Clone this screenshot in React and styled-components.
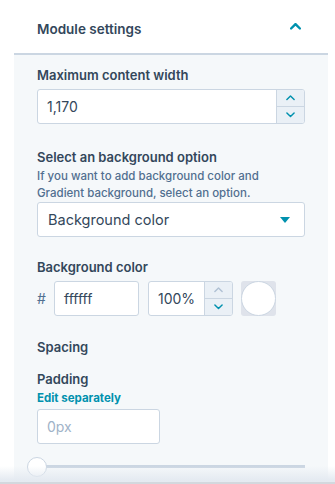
import styled, { createGlobalStyle } from "styled-components";

const GlobalStyle = createGlobalStyle`
  html, body {
    margin: 0;
    padding: 0;
    background: #fff;
  }
  body {
    font-family: Inter, "Noto Sans", sans-serif;
    color: #33475b;
  }
`;

const Page = styled.div`
  position: relative;
  width: 335px;
  height: 484px;
  overflow: hidden;
  background: #fff;
`;

const Header = styled.div`
  display: flex;
  align-items: center;
  justify-content: space-between;
  height: 55px;
  margin-left: 14px;
  margin-right: 7px;
  padding: 0 27px 0 23px;
  box-sizing: border-box;
  border-bottom: 2px solid #cbd6e2;
`;

const HeaderTitle = styled.h2`
  margin: 0;
  font-size: 13.5px;
  font-weight: 600;
  color: #33475b;
  padding-top: 4px;
`;

const Panel = styled.div`
  margin-left: 14px;
  margin-right: 7px;
  background: #f5f8fa;
  padding: 11px 23px 40px 23px;
  display: flex;
  flex-direction: column;
`;

const Field = styled.div`
  display: flex;
  flex-direction: column;
  margin-bottom: ${(p) => p.$mb || 0}px;
`;

const Label = styled.label`
  font-size: 13px;
  font-weight: 600;
  line-height: 18px;
  color: #33475b;
  margin-bottom: ${(p) => p.$mb || 0}px;
`;

const Help = styled.p`
  margin: 0;
  font-size: 11.5px;
  font-weight: 500;
  line-height: 17px;
  color: #516f90;
`;

const Link = styled.a`
  font-size: 11.5px;
  font-weight: 700;
  line-height: 16px;
  color: #0091ae;
  margin-bottom: 3px;
  cursor: pointer;
`;

const InputBox = styled.div`
  display: flex;
  height: 35px;
  width: ${(p) => p.$w}px;
  box-sizing: border-box;
  border: 1px solid #cbd6e2;
  border-radius: 3px;
  background: #fff;
  overflow: hidden;
`;

const InputText = styled.span`
  flex: 1;
  display: flex;
  align-items: center;
  padding-left: ${(p) => p.$pl || 9}px;
  font-size: ${(p) => p.$fs || 14}px;
  color: ${(p) => (p.$placeholder ? "#9fb3c8" : "#33475b")};
`;

const Stepper = styled.div`
  width: 27px;
  display: flex;
  flex-direction: column;
  border-left: 1px solid #cbd6e2;
  background: #eaf0f6;
`;

const StepBtn = styled.div`
  flex: 1;
  display: flex;
  align-items: center;
  justify-content: center;
  & + & {
    border-top: 1px solid #cbd6e2;
  }
`;

const SelectBox = styled(InputBox)`
  align-items: center;
  justify-content: space-between;
  padding-right: 14px;
`;

const Row = styled.div`
  display: flex;
  align-items: center;
  gap: 9px;
`;

const Hash = styled.span`
  font-size: 14px;
  color: #516f90;
  width: 8px;
`;

const SwatchWrap = styled.div`
  position: relative;
  width: 35px;
  height: 35px;
  background: #dfe3eb;
  border-radius: 3px;
  margin-left: -1px;
`;

const Swatch = styled.div`
  position: absolute;
  inset: 0;
  border-radius: 50%;
  background: #fff;
  border: 1px solid #cbd6e2;
  box-sizing: border-box;
`;

const SectionTitle = styled.div`
  font-size: 13px;
  font-weight: 600;
  line-height: 18px;
  color: #33475b;
  margin: 22px 0 14px;
`;

const Slider = styled.div`
  position: relative;
  height: 20px;
  margin: 12px 0 0 -10px;
  display: flex;
  align-items: center;
`;

const Track = styled.div`
  flex: 1;
  height: 3px;
  background: #cbd6e2;
  margin-left: 10px;
`;

const Thumb = styled.div`
  position: absolute;
  left: 0;
  top: 1px;
  width: 18px;
  height: 18px;
  border-radius: 50%;
  background: #fff;
  border: 1px solid #cbd6e2;
`;

const Footer = styled.div`
  position: absolute;
  left: 0;
  right: 0;
  bottom: 0;
  height: 16px;
  background: linear-gradient(
    to bottom,
    rgba(234, 240, 246, 0) 0%,
    rgba(228, 234, 241, 0.95) 85%
  );
  border-bottom: 2px solid #d3d8de;
`;

const Chevron = ({ up, size = 10, color = "#0091ae", w = 2 }) => (
  <svg width={size} height={size * 0.6} viewBox="0 0 10 6">
    <path
      d={up ? "M1 5 L5 1 L9 5" : "M1 1 L5 5 L9 1"}
      fill="none"
      stroke={color}
      strokeWidth={w}
      strokeLinecap="round"
      strokeLinejoin="round"
    />
  </svg>
);

const Spin = ({ upColor = "#0091ae" }) => (
  <Stepper>
    <StepBtn>
      <Chevron up size={9} color={upColor} w={1.6} />
    </StepBtn>
    <StepBtn>
      <Chevron size={9} w={1.6} />
    </StepBtn>
  </Stepper>
);

export default function App() {
  return (
    <Page>
      <GlobalStyle />
      <Header>
        <HeaderTitle>Module settings</HeaderTitle>
        <Chevron up size={11} w={2.2} />
      </Header>
      <Panel>
        <Field $mb={24}>
          <Label $mb={5}>Maximum content width</Label>
          <InputBox $w={268}>
            <InputText>1,170</InputText>
            <Spin />
          </InputBox>
        </Field>

        <Field $mb={21}>
          <Label $mb={2}>Select an background option</Label>
          <Help>
            If you want to add background color and
            <br />
            Gradient background, select an option.
          </Help>
          <SelectBox $w={268}>
            <InputText $pl={10} $fs={14.5}>
              Background color
            </InputText>
            <svg width="10" height="6" viewBox="0 0 10 6">
              <path d="M0 0 L10 0 L5 6 Z" fill="#0091ae" />
            </svg>
          </SelectBox>
        </Field>

        <Field>
          <Label $mb={5}>Background color</Label>
          <Row>
            <Hash>#</Hash>
            <InputBox $w={85}>
              <InputText $pl={9}>ffffff</InputText>
            </InputBox>
            <InputBox $w={85}>
              <InputText $pl={9}>100%</InputText>
              <Spin upColor="#b0c1d4" />
            </InputBox>
            <SwatchWrap>
              <Swatch />
            </SwatchWrap>
          </Row>
        </Field>

        <SectionTitle>Spacing</SectionTitle>

        <Field>
          <Label $mb={2}>Padding</Label>
          <Link>Edit separately</Link>
          <InputBox $w={123}>
            <InputText $placeholder>0px</InputText>
          </InputBox>
          <Slider>
            <Track />
            <Thumb />
          </Slider>
        </Field>
      </Panel>
      <Footer />
    </Page>
  );
}
